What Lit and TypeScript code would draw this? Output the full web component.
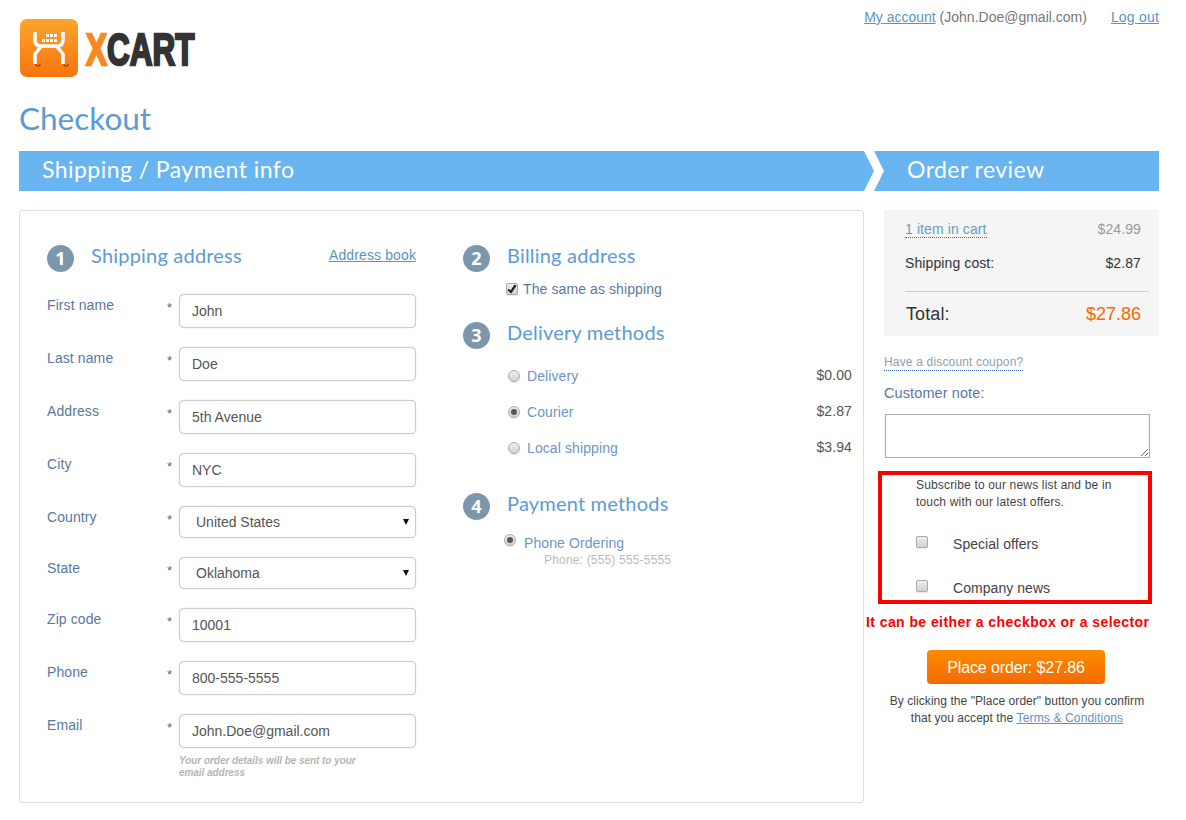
import { LitElement, html, css } from "lit";
import { customElement } from "lit/decorators.js";

@customElement("app-root")
export class AppRoot extends LitElement {
  static styles = css`
    :host { display: block; width: 1186px; height: 820px; overflow: hidden; background: #fff; font-family: "Liberation Sans", Arial, sans-serif; font-size: 14px; letter-spacing: .1px; color: #333; }
    * { box-sizing: border-box; }
    a { color: #5b93c4; text-decoration: underline; }
    .page { width: 1140px; margin-left: 19px; }
    .top { display: flex; justify-content: space-between; align-items: flex-start; height: 77px; }
    .logo { display: block; margin-top: 19px; }
    .account { margin-top: 9px; line-height: 16px; color: #777; display: flex; letter-spacing: 0; }
    .account .me { margin-right: 24px; }
    .account > a { letter-spacing: .2px; }
    h1 { margin: 21px 0 13px; font: 400 31.500px/40px Lato, sans-serif; letter-spacing: 0; color: #5b9bd5; }
    .steps { display: flex; height: 40px; color: #fff; font: 400 23px/37px Lato, sans-serif; letter-spacing: .45px; }
    .step-a { flex: 1; background: #69b5f1; padding-left: 23px; clip-path: polygon(0 0, calc(100% - 10px) 0, 100% 50%, calc(100% - 10px) 100%, 0 100%); }
    .step-b { width: 285px; background: #69b5f1; padding-left: 33px; clip-path: polygon(0 0, 100% 0, 100% 100%, 0 100%, 10px 50%); }
    .main { display: flex; margin-top: 19px; gap: 20px; align-items: flex-start; }
    .card { width: 845px; height: 593px; border: 1px solid #ddd; border-radius: 3px; padding: 34px 11px 0 27px; display: flex; gap: 47px; }
    .col-l { width: 369px; }
    .col-r { width: 389px; }
    .head { display: flex; align-items: center; height: 27px; }
    .num { width: 27px; height: 27px; border-radius: 50%; background: #7c97ab; color: #fff; font: 700 18px/27px "Noto Sans", sans-serif; letter-spacing: 0; text-align: center; flex: none; }
    .title { font: 400 20px/27px Lato, sans-serif; letter-spacing: .2px; color: #5b9bd5; margin-left: 17px; flex: 1; padding-bottom: 6px; }
    .head a { font-size: 14px; letter-spacing: .12px; padding-bottom: 8px; }
    .fields { margin-top: 22px; display: flex; flex-direction: column; gap: 19px; }
    .field { display: grid; grid-template-columns: 120px 12px 237px; }
    .field label { color: #5a789f; line-height: 16px; padding-top: 3px; }
    .star { color: #666; font-size: 13px; line-height: 16px; padding-top: 6px; }
    .ctl { width: 237px; height: 34px; border: 1px solid #ccc; border-radius: 5px; padding: 0 12px; font: 14px "Liberation Sans", Arial, sans-serif; letter-spacing: 0; color: #555; background: #fff; box-shadow: 0 0 1px #bbb; outline: none; display: block; }
    .sel { height: 32px; padding: 0 16px; position: relative; line-height: 30px; }
    .sel::after { content: ""; position: absolute; right: 6px; top: 12px; border: 3.500px solid transparent; border-top: 6px solid #111; border-bottom: 0; }
    .hint { grid-column: 3; width: 190px; margin-top: 7px; font: italic 700 10px/12px "Liberation Sans", Arial, sans-serif; color: #b5b5b5; letter-spacing: -.05px; }
    .cb, .rd { appearance: none; margin: 0; width: 12px; height: 12px; flex: none; border: 1px solid #aaa; background: linear-gradient(#eee, #d2d2d2); box-shadow: 0 1px 1px rgba(0,0,0,.1); position: relative; display: block; }
    .cb { border-radius: 2px; }
    .rd { border-radius: 50%; }
    .rd:checked::after { content: ""; position: absolute; left: 2px; top: 2px; width: 6px; height: 6px; border-radius: 50%; background: #555; }
    .cb:checked::after { content: ""; position: absolute; inset: 0; background: #222; clip-path: polygon(14% 48%, 38% 62%, 74% 4%, 96% 18%, 42% 96%, 6% 66%); }
    .same { display: flex; align-items: center; gap: 5px; margin: 9px 0 25px 43px; height: 16px; color: #5a789f; }
    .deliv { margin: 9px 0 27px; }
    .dl { display: flex; align-items: center; height: 36px; padding-left: 45px; color: #6f94c8; gap: 7px; }
    .dl span:first-of-type { flex: 1; }
    .dl .pr { color: #555; padding-bottom: 2px; letter-spacing: .1px; }
    .pay { display: flex; align-items: flex-start; margin: 15px 0 0 41px; gap: 8px; color: #6f94c8; line-height: 16px; }
    .pay .rd { margin-top: -1px; }
    .ph { padding: 1px 0 0 81px; color: #bbb; font-size: 12px; line-height: 16px; letter-spacing: .18px; }
    .side { width: 275px; }
    .sum { background: #f5f5f5; height: 126px; padding: 11px 10px 0 21px; }
    .r { display: flex; justify-content: space-between; padding-right: 8px; line-height: 16px; }
    .r.a { height: 17px; }
    .link { color: #6b9ac4; border-bottom: 1px dotted #3c6ea8; display: block; height: 17px; }
    .r .g { color: #999; }
    .r.b { margin-top: 17px; }
    .rule { height: 1px; background: #ccc; margin-top: 20px; }
    .r.t { margin-top: 11px; font-size: 18px; line-height: 22px; padding-left: 1px; }
    .r.t b { font-weight: 400; color: #f60; letter-spacing: 0; }
    .coupon { display: inline-block; margin-top: 18px; font-size: 12px; line-height: 16px; letter-spacing: .17px; color: #8f9db0; border-bottom: 1px dotted #2c6cb8; }
    .note { margin-top: 14px; line-height: 16px; font-size: 14.500px; color: #5a789f; }
    textarea { display: block; margin: 13px 0 0 1px; width: 265px; height: 44px; border: 1px solid #aaa; border-radius: 0; background: #fff; outline: none; }
    .red { margin: 13px 0 0 -6px; width: 274px; height: 133px; border: 4px solid #f00; padding: 2px 0 0 34px; }
    .red p { margin: 0 0 26px; width: 205px; font-size: 12px; line-height: 16.500px; letter-spacing: .17px; color: #444; }
    .opt { display: flex; gap: 25px; line-height: 16px; margin-bottom: 28px; color: #444; letter-spacing: .05px; }
    .warn { margin: 10px 0 0 -18px; font-size: 14px; font-weight: 700; line-height: 16px; color: #f00; letter-spacing: .42px; white-space: nowrap; }
    .btn { display: block; margin: 20px 0 0 43px; width: 178px; height: 34px; border: 0; border-radius: 4px; padding: 1px 0 0; background: linear-gradient(#fb8c00, #f46a00); color: #fff; font: 16px "Liberation Sans", Arial, sans-serif; letter-spacing: -.1px; }
    .cap { margin-top: 9px; width: 266px; text-align: center; font-size: 12px; line-height: 17px; letter-spacing: .05px; color: #444; }
    .cap a { letter-spacing: .14px; }
  `;

  private logo() {
    return html`<svg class="logo" width="180" height="58" viewBox="19 19 180 58">
      <defs><linearGradient id="lg" x1="0" y1="0" x2="0" y2="1"><stop offset="0" stop-color="#fda42e"/><stop offset="1" stop-color="#f8740e"/></linearGradient></defs>
      <rect x="20" y="19" width="58" height="58" rx="7" fill="url(#lg)"/>
      <path d="M36 64 a2 2 0 0 0 4 0 M64 64 a2 2 0 0 0 4 0" fill="none" stroke="#a5500f" stroke-width="1.500"/>
      <path d="M35 32 V40 Q35 46 41 46 H57 Q63 46 63 40 V32 M41.500 46 L35 54 V64 M56.500 46 L63 54 V64" fill="none" stroke="#fff" stroke-width="3.500" stroke-linejoin="round"/>
      <g fill="#fff">
        <rect x="46" y="34" width="3" height="3"/><rect x="50" y="34" width="3" height="3"/><rect x="54" y="34" width="3" height="3"/>
        <rect x="42" y="39" width="3" height="3"/><rect x="46" y="39" width="3" height="3"/><rect x="50" y="39" width="3" height="3"/><rect x="54" y="39" width="3" height="3"/>
      </g>
      <text transform="translate(86 65) scale(.7 1)" font-family="Liberation Sans" font-weight="700" font-size="45" letter-spacing="0" stroke-width="2.400"><tspan fill="#f68a1f" stroke="#f68a1f">X</tspan><tspan fill="#333" stroke="#333">CART</tspan></text>
    </svg>`;
  }

  private field(name: string, value: string, sel = false) {
    return html`<div class="field"><label>${name}</label><span class="star">*</span>
      ${sel
        ? html`<div class="ctl sel">${value}</div>`
        : html`<input class="ctl" .value=${value} />`}
    </div>`;
  }

  private delivery(name: string, price: string, checked = false) {
    return html`<div class="dl"><input class="rd" type="radio" name="d" ?checked=${checked} /><span>${name}</span><span class="pr">${price}</span></div>`;
  }

  render() {
    return html`<div class="page">
      <div class="top">
        ${this.logo()}
        <div class="account"><span class="me"><a href="#">My account</a> (John.Doe@gmail.com)</span><a href="#">Log out</a></div>
      </div>
      <h1>Checkout</h1>
      <div class="steps"><div class="step-a">Shipping / Payment info</div><div class="step-b">Order review</div></div>
      <div class="main">
        <div class="card">
          <div class="col-l">
            <div class="head"><span class="num">1</span><span class="title">Shipping address</span><a href="#">Address book</a></div>
            <div class="fields">
              ${this.field("First name", "John")}
              ${this.field("Last name", "Doe")}
              ${this.field("Address", "5th Avenue")}
              ${this.field("City", "NYC")}
              ${this.field("Country", "United States", true)}
              ${this.field("State", "Oklahoma", true)}
              ${this.field("Zip code", "10001")}
              ${this.field("Phone", "800-555-5555")}
              <div class="field"><label>Email</label><span class="star">*</span><input class="ctl" .value=${"John.Doe@gmail.com"} />
                <div class="hint">Your order details will be sent to your email address</div></div>
            </div>
          </div>
          <div class="col-r">
            <div class="head"><span class="num">2</span><span class="title">Billing address</span></div>
            <div class="same"><input class="cb" type="checkbox" checked /><span>The same as shipping</span></div>
            <div class="head"><span class="num">3</span><span class="title">Delivery methods</span></div>
            <div class="deliv">
              ${this.delivery("Delivery", "$0.00")}
              ${this.delivery("Courier", "$2.87", true)}
              ${this.delivery("Local shipping", "$3.94")}
            </div>
            <div class="head"><span class="num">4</span><span class="title">Payment methods</span></div>
            <div class="pay"><input class="rd" type="radio" name="p" checked /><span>Phone Ordering</span></div>
            <div class="ph">Phone: (555) 555-5555</div>
          </div>
        </div>
        <div class="side">
          <div class="sum">
            <div class="r a"><span class="link">1 item in cart</span><span class="g">$24.99</span></div>
            <div class="r b"><span>Shipping cost:</span><span>$2.87</span></div>
            <div class="rule"></div>
            <div class="r t"><span>Total:</span><b>$27.86</b></div>
          </div>
          <span class="coupon">Have a discount coupon?</span>
          <div class="note">Customer note:</div>
          <textarea></textarea>
          <div class="red">
            <p>Subscribe to our news list and be in touch with our latest offers.</p>
            <div class="opt"><input class="cb" type="checkbox" /><span>Special offers</span></div>
            <div class="opt"><input class="cb" type="checkbox" /><span>Company news</span></div>
          </div>
          <div class="warn">It can be either a checkbox or a selector</div>
          <button class="btn">Place order: $27.86</button>
          <div class="cap">By clicking the "Place order" button you confirm that you accept the <a href="#">Terms &amp; Conditions</a></div>
        </div>
      </div>
    </div>`;
  }
}
